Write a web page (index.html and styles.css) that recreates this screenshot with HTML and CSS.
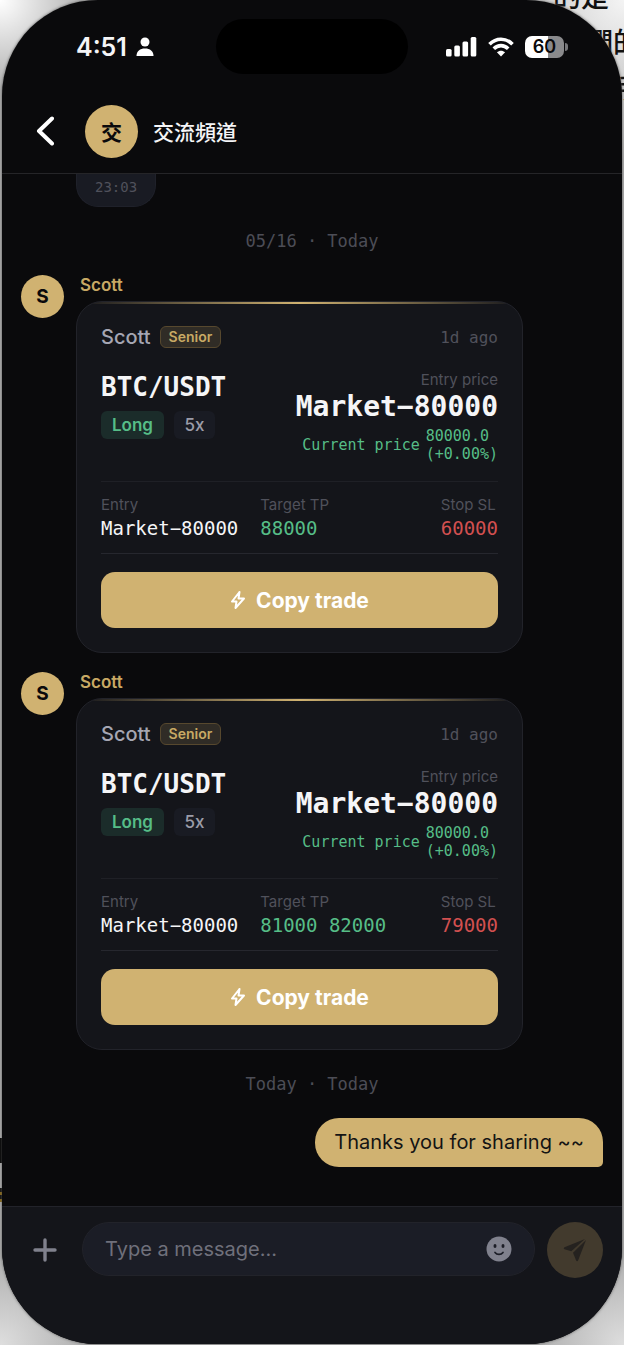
FILE: index.html
```html
<!DOCTYPE html>
<html lang="zh-Hant">
<head>
  <meta charset="UTF-8" />
  <meta name="viewport" content="width=device-width, initial-scale=1.0"/>
  <title>交流頻道</title>
  <link rel="stylesheet" href="styles.css">
</head>
<body>
  <!-- Page text showing behind the phone -->
  <div class="backdrop">
    <p>的是</p>
    <p>們的</p>
    <p>手</p>
  </div>
  <div class="backdrop-mark"></div>
  <div class="backdrop-mark mark-gold"></div>

  <div class="phone">
    <!-- Status bar -->
    <div class="status-bar">
      <div class="status-time">
        <span>4:51</span>
        <svg width="18" height="20" viewBox="0 0 18 20" fill="#fff"><circle cx="9" cy="5" r="4.500"/><path d="M0.500 19C0.500 14 4 11.500 9 11.500S17.500 14 17.500 19Z"/></svg>
      </div>
      <div class="island"></div>
      <div class="status-icons">
        <svg width="31" height="20" viewBox="0 0 31 20" fill="#fff"><rect x="0" y="12" width="5.600" height="7.500" rx="1.500"/><rect x="8.300" y="8.500" width="5.600" height="11" rx="1.500"/><rect x="16.500" y="4.500" width="5.600" height="15" rx="1.500"/><rect x="24.700" y="0" width="5.600" height="19.500" rx="1.500"/></svg>
        <svg width="26" height="20" viewBox="0 0 26 20" fill="none" stroke="#fff" stroke-width="3.600"><path d="M1.500 7.300C8 0.500 18 0.500 24.500 7.300"/><path d="M5.800 11.800C10 7.600 16 7.600 20.200 11.800"/><path d="M13 19.500L8.900 15.300C11.300 13.100 14.700 13.100 17.100 15.300Z" fill="#fff" stroke="none"/></svg>
        <div class="battery"><span>60</span></div>
      </div>
    </div>

    <!-- Channel header -->
    <header class="header">
      <button class="back" aria-label="Back">
        <svg width="20" height="32" viewBox="0 0 20 32" fill="none" stroke="#fff" stroke-width="4" stroke-linecap="round" stroke-linejoin="round"><path d="M18 3.500L5 16L18 28.500"/></svg>
      </button>
      <div class="avatar avatar-channel">交</div>
      <h1 class="title">交流頻道</h1>
    </header>

    <!-- Messages -->
    <main class="chat">
      <div class="old-bubble">23:03</div>
      <div class="date">05/16 · Today</div>

      <article class="message">
        <div class="avatar">S</div>
        <div class="message-body">
          <div class="sender">Scott</div>
          <section class="card">
            <div class="card-top">
              <span class="trader">Scott</span>
              <span class="badge">Senior</span>
              <span class="ago">1d ago</span>
            </div>
            <div class="summary">
              <div class="pair">
                <h2>BTC/USDT</h2>
                <span class="tag tag-long">Long</span>
                <span class="tag">5x</span>
              </div>
              <div class="price">
                <div class="label">Entry price</div>
                <div class="price-value">Market−80000</div>
                <div class="current"><span>Current price</span><span>80000.0<br>(+0.00%)</span></div>
              </div>
            </div>
            <dl class="levels">
              <div><dt class="label">Entry</dt><dd>Market−80000</dd></div>
              <div><dt class="label">Target TP</dt><dd class="green">88000</dd></div>
              <div><dt class="label">Stop SL</dt><dd class="red">60000</dd></div>
            </dl>
            <button class="copy">
              <svg width="16" height="20" viewBox="0 0 16 20" fill="none" stroke="#fff" stroke-width="2" stroke-linejoin="round"><path d="M9.500 2L2 11.500H6.500L5.500 18L14 8.500H8.500Z"/></svg>
              Copy trade
            </button>
          </section>
        </div>
      </article>

      <article class="message">
        <div class="avatar">S</div>
        <div class="message-body">
          <div class="sender">Scott</div>
          <section class="card">
            <div class="card-top">
              <span class="trader">Scott</span>
              <span class="badge">Senior</span>
              <span class="ago">1d ago</span>
            </div>
            <div class="summary">
              <div class="pair">
                <h2>BTC/USDT</h2>
                <span class="tag tag-long">Long</span>
                <span class="tag">5x</span>
              </div>
              <div class="price">
                <div class="label">Entry price</div>
                <div class="price-value">Market−80000</div>
                <div class="current"><span>Current price</span><span>80000.0<br>(+0.00%)</span></div>
              </div>
            </div>
            <dl class="levels">
              <div><dt class="label">Entry</dt><dd>Market−80000</dd></div>
              <div><dt class="label">Target TP</dt><dd class="green">81000 82000</dd></div>
              <div><dt class="label">Stop SL</dt><dd class="red">79000</dd></div>
            </dl>
            <button class="copy">
              <svg width="16" height="20" viewBox="0 0 16 20" fill="none" stroke="#fff" stroke-width="2" stroke-linejoin="round"><path d="M9.500 2L2 11.500H6.500L5.500 18L14 8.500H8.500Z"/></svg>
              Copy trade
            </button>
          </section>
        </div>
      </article>

      <div class="date">Today · Today</div>
      <div class="own-bubble">Thanks you for sharing ~~</div>
    </main>

    <!-- Composer -->
    <form class="composer">
      <button type="button" class="add" aria-label="Add">
        <svg width="24" height="24" viewBox="0 0 24 24" fill="none" stroke="#80818d" stroke-width="3.400" stroke-linecap="round"><path d="M12 2V22M2 12H22"/></svg>
      </button>
      <div class="field">
        <input type="text" class="message-input" aria-label="Message" placeholder="Type a message..."/>
        <button type="button" class="emoji" aria-label="Emoji">
          <svg width="26" height="26" viewBox="0 0 26 26"><circle cx="13" cy="13" r="12.500" fill="#80818d"/><ellipse cx="9" cy="10" rx="1.500" ry="1.900" fill="#1b1d26"/><ellipse cx="17" cy="10" rx="1.500" ry="1.900" fill="#1b1d26"/><path d="M9 16.500C11 19 15 19 17 16.500" fill="none" stroke="#1b1d26" stroke-width="1.700" stroke-linecap="round"/></svg>
        </button>
      </div>
      <button class="send" aria-label="Send">
        <svg width="24" height="24" viewBox="0 0 24 24" fill="#25221f"><path d="M22 1L1.500 9.300C0.500 9.800 0.500 10.800 1.500 11.200L8.300 13.300Z"/><path d="M23 2L10 14.800L13 22.300C13.500 23.500 14.700 23.500 15.200 22.300Z"/></svg>
      </button>
    </form>
  </div>
</body>
</html>
```

FILE: styles.css
```css
* {
  box-sizing: border-box;
  margin: 0;
  padding: 0;
}

body {
  min-height: 100vh;
  position: relative;
  overflow-x: hidden;
  font-family: "Inter", "Noto Sans CJK TC", sans-serif;
  color: #f5f5f7;
  background:
    radial-gradient(circle at 0 0, #ffffff, transparent 90px),
    radial-gradient(circle at 100% 0, #f4f4f4, transparent 160px),
    radial-gradient(circle at 0 100%, #dedede, transparent 90px),
    radial-gradient(circle at 100% 100%, #dedede, transparent 90px),
    #aeaeae;
}

button {
  border: none;
  background: none;
  font-family: inherit;
  cursor: pointer;
}

svg {
  display: block;
}

/* Page text behind the phone */
.backdrop {
  position: absolute;
  top: -26px;
  left: 553px;
  width: 71px;
  overflow: hidden;
  color: #111;
  font-size: 28px;
  font-weight: 500;
  line-height: 46px;
  white-space: nowrap;
}
.backdrop p:nth-child(2) {
  padding-left: 32px;
}
.backdrop p:nth-child(3) {
  padding-left: 64px;
}

.backdrop-mark {
  position: absolute;
  top: 1138px;
  left: 0;
  width: 3px;
  height: 25px;
  background: #050505;
}
.mark-gold {
  top: 1188px;
  height: 14px;
  background: linear-gradient(#111 25%, #8a6a18 25%, #8a6a18 50%, #111 50%, #111 75%, #8a6a18 75%);
}

.phone {
  position: relative;
  display: flex;
  flex-direction: column;
  min-height: calc(100vh - 1px);
  margin: 0 2px 1px;
  overflow: hidden;
  background: #0a0a0c;
  border-radius: 96px;
  box-shadow: 0 0 3px #555;
}

/* Status bar */
.status-bar {
  display: grid;
  grid-template-columns: 1fr 192px 1fr;
  align-items: center;
  height: 93px;
}
.status-time {
  display: flex;
  align-items: center;
  gap: 9px;
  padding-left: 74px;
  font-size: 25px;
  font-weight: 600;
}
.island {
  height: 55px;
  border-radius: 28px;
  background: #000;
}
.status-icons {
  display: flex;
  align-items: center;
  gap: 11px;
  padding-left: 38px;
}
.battery {
  position: relative;
  width: 39px;
  height: 22px;
  border-radius: 7px;
  background: linear-gradient(90deg, #fff 60%, #8a8a8c 60%);
  color: #0a0a0c;
  font-size: 18px;
  font-weight: 600;
  line-height: 22px;
  text-align: center;
}
.battery::after {
  content: "";
  position: absolute;
  right: -4px;
  top: 7px;
  width: 3px;
  height: 8px;
  border-radius: 0 3px 3px 0;
  background: #77777a;
}

/* Channel header */
.header {
  display: flex;
  align-items: center;
  height: 81px;
  padding: 0 32px 4px;
  border-bottom: 1px solid #252528;
}
.back {
  width: 51px;
}
.avatar {
  display: flex;
  flex-shrink: 0;
  align-items: center;
  justify-content: center;
  width: 43px;
  height: 43px;
  border-radius: 50%;
  background: #d0b271;
  color: #0a0a0c;
  font-size: 19px;
  font-weight: 700;
}
.avatar-channel {
  width: 53px;
  height: 53px;
  font-size: 21px;
}
.title {
  margin-left: 15px;
  font-size: 21px;
  font-weight: 500;
}

/* Messages */
.chat {
  display: flex;
  flex: 1;
  flex-direction: column;
  align-items: flex-start;
  padding: 0 19px 39px;
}
.old-bubble {
  margin-left: 55px;
  height: 33px;
  padding: 0 18px;
  border: 1px solid #1f212a;
  border-top: none;
  border-radius: 0 0 22px 22px;
  background: #191b23;
  color: #50515b;
  font-family: "DejaVu Sans Mono", monospace;
  font-size: 14px;
  line-height: 26px;
}
.date {
  align-self: center;
  height: 68px;
  color: #4c4d56;
  font-family: "DejaVu Sans Mono", monospace;
  font-size: 17px;
  line-height: 69px;
}
.message {
  display: flex;
  gap: 12px;
  width: 502px;
  max-width: 100%;
}
.message + .message {
  margin-top: 19px;
}
.message-body {
  flex: 1;
}
.sender {
  padding-left: 4px;
  height: 26px;
  color: #c8a964;
  font-size: 17px;
  font-weight: 600;
  line-height: 20px;
}

/* Trade card */
.card {
  position: relative;
  overflow: hidden;
  padding: 23px 24px 24px;
  border: 1px solid #22232a;
  border-radius: 26px;
  background: #14151a;
}
.card::before {
  content: "";
  position: absolute;
  inset: 0 0 auto;
  height: 2px;
  background: linear-gradient(90deg, transparent, #d0b271, transparent);
}
.card-top {
  display: flex;
  align-items: center;
  height: 24px;
}
.trader {
  color: #a5a6b3;
  font-size: 20px;
  font-weight: 500;
}
.badge {
  margin-left: 9px;
  padding: 0 8px;
  border: 1px solid #57482e;
  border-radius: 6px;
  background: #302c26;
  color: #c8a964;
  font-size: 14px;
  font-weight: 600;
  line-height: 20px;
}
.ago {
  margin-left: auto;
  color: #50515b;
  font-family: "DejaVu Sans Mono", monospace;
  font-size: 16px;
}
.summary {
  display: flex;
  justify-content: space-between;
  padding: 21px 0 18px;
}
.pair h2 {
  margin-bottom: 7px;
  font-family: "DejaVu Sans Mono", monospace;
  font-size: 26px;
  line-height: 34px;
}
.tag {
  display: inline-block;
  margin-right: 5px;
  padding: 0 11px;
  border-radius: 6px;
  background: #191b23;
  color: #9b9ca8;
  font-size: 17px;
  font-weight: 500;
  line-height: 28px;
}
.tag-long {
  background: #1b2c2a;
  color: #56bd87;
  font-weight: 600;
}
.label {
  color: #50515b;
  font-size: 15px;
  line-height: 20px;
}
.price {
  text-align: right;
}
.price-value {
  font-family: "DejaVu Sans Mono", monospace;
  font-size: 28px;
  font-weight: 700;
  line-height: 34px;
}
.current {
  display: flex;
  align-items: center;
  justify-content: flex-end;
  gap: 6px;
  margin-top: 3px;
  color: #56bd87;
  font-family: "DejaVu Sans Mono", monospace;
  font-size: 15px;
  line-height: 18px;
  text-align: left;
}
.levels {
  display: grid;
  grid-template-columns: auto 1fr auto;
  column-gap: 22px;
  padding: 13px 0 12px;
  border-top: 1px solid #1f2026;
  border-bottom: 1px solid #26272e;
}
.levels dd {
  font-family: "DejaVu Sans Mono", monospace;
  font-size: 19px;
  line-height: 26px;
}
.green {
  color: #56bd87;
}
.red {
  color: #d25050;
}
.copy {
  display: flex;
  align-items: center;
  justify-content: center;
  gap: 10px;
  width: 100%;
  height: 56px;
  margin-top: 18px;
  border-radius: 14px;
  background: #d0b271;
  color: #fff;
  font-size: 21px;
  font-weight: 700;
}

.own-bubble {
  align-self: flex-end;
  padding: 0 19px;
  border-radius: 24px 24px 5px 24px;
  background: #d0b271;
  color: #141414;
  font-size: 20px;
  line-height: 49px;
}

/* Composer */
.composer {
  display: flex;
  align-items: flex-start;
  gap: 12px;
  height: 138px;
  padding: 15px 19px 0 31px;
  border-top: 1px solid #22232a;
  background: #14151a;
}
.add {
  width: 37px;
  height: 56px;
}
.field {
  display: flex;
  flex: 1;
  align-items: center;
  height: 54px;
  padding: 0 22px;
  border: 1px solid #22232a;
  border-radius: 27px;
  background: #1b1d26;
}
.message-input {
  flex: 1;
  min-width: 0;
  border: none;
  outline: none;
  background: none;
  color: #f5f5f7;
  font-family: inherit;
  font-size: 20px;
}
.message-input::placeholder {
  color: #6f707b;
}
.send {
  display: flex;
  align-items: center;
  justify-content: center;
  width: 56px;
  height: 56px;
  border-radius: 50%;
  background: #423a2d;
}
```
